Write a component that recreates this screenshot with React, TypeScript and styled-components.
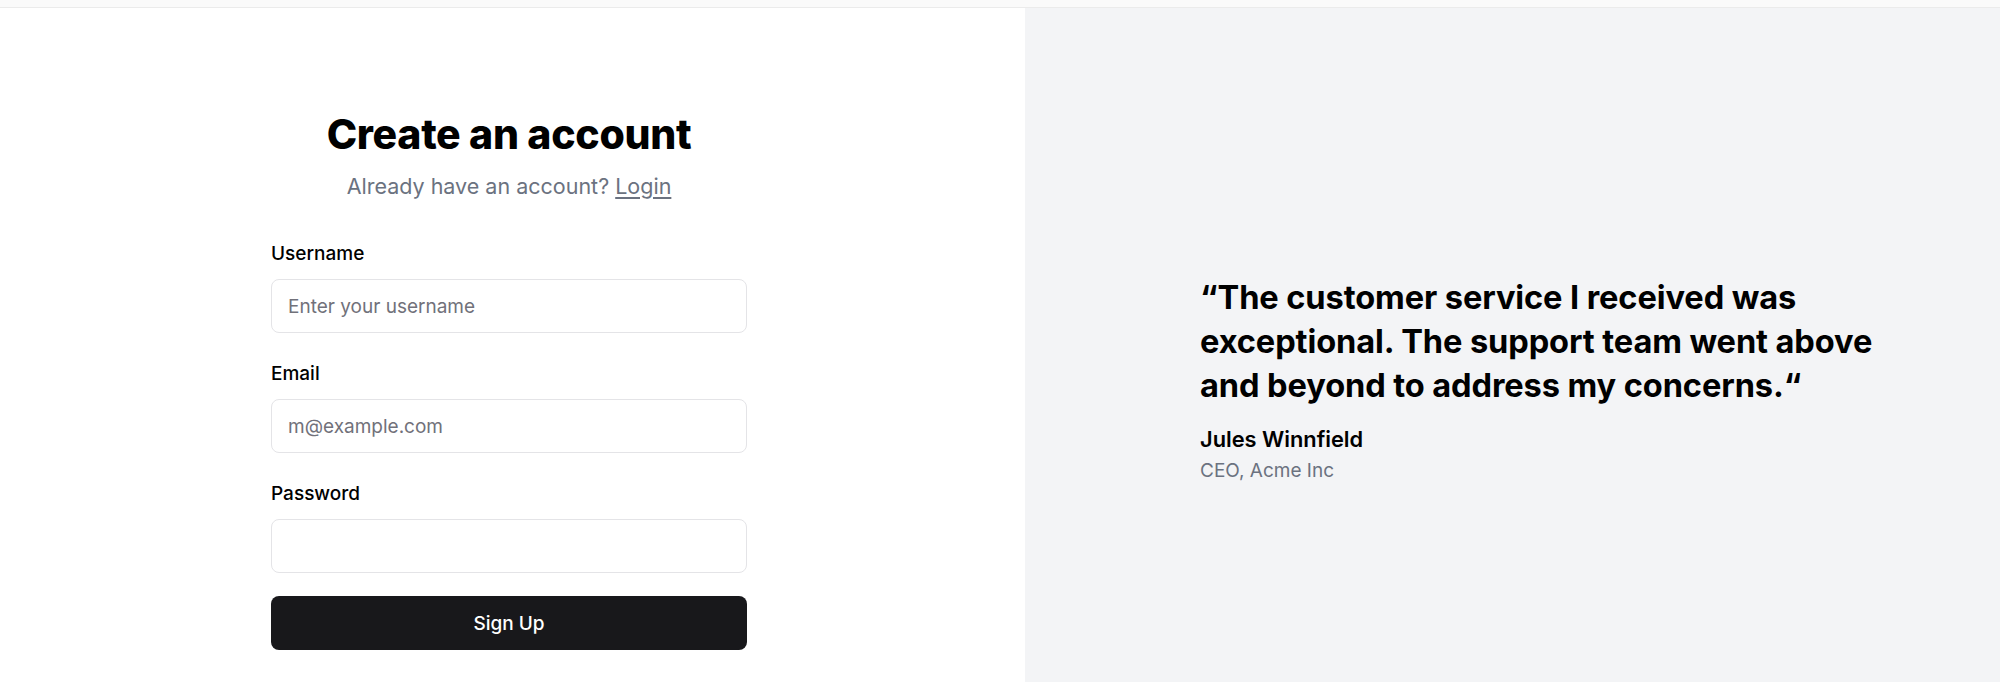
import React from "react";
import styled, { createGlobalStyle } from "styled-components";

const Global = createGlobalStyle`
  * { box-sizing: border-box; }
  html, body { margin: 0; padding: 0; background: #ffffff; }
  body { font-family: Inter, "Noto Sans", Arial, sans-serif; color: #000; }
  input::placeholder { color: #71717a; }
`;

const Page = styled.div`
  width: 2000px;
  height: 682px;
  display: flex;
  flex-direction: column;
  overflow: hidden;
`;

const TopStrip = styled.div`
  height: 8px;
  flex: none;
  background: #fafafa;
  border-bottom: 1px solid #ebebeb;
`;

const Split = styled.div`
  flex: 1;
  display: grid;
  grid-template-columns: 1025px 1fr;
`;

const FormSide = styled.section`
  background: #ffffff;
  padding: 101px 0 0 271px;
`;

const FormColumn = styled.div`
  width: 476px;
  display: flex;
  flex-direction: column;
`;

const Header = styled.header`
  display: flex;
  flex-direction: column;
  align-items: center;
  margin-bottom: 39px;
`;

const Title = styled.h1`
  margin: 0;
  font-size: 41px;
  line-height: 50px;
  font-weight: 800;
  letter-spacing: -0.3px;
  color: #000;
`;

const Subtitle = styled.p`
  margin: 11px 0 0;
  font-size: 21.5px;
  line-height: 32px;
  color: #6b7280;
`;

const LoginLink = styled.a`
  color: #6b7280;
  text-decoration: underline;
  text-underline-offset: 3px;
`;

const Field = styled.div`
  display: flex;
  flex-direction: column;
  gap: 12px;
  margin-bottom: 28px;
`;

const Label = styled.label`
  font-size: 19px;
  line-height: 26px;
  font-weight: 500;
  color: #000;
`;

const Input = styled.input`
  height: 54px;
  width: 100%;
  border: 1px solid #e4e4e7;
  border-radius: 8px;
  padding: 0 16px;
  font-family: inherit;
  font-size: 19px;
  color: #000;
  background: #fff;
  outline: none;
`;

const Button = styled.button`
  margin-top: -5px;
  height: 54px;
  width: 100%;
  border: none;
  border-radius: 8px;
  background: #18181b;
  color: #fff;
  font-family: inherit;
  font-size: 19px;
  font-weight: 500;
`;

const QuoteSide = styled.section`
  background: #f3f4f6;
  padding: 267px 0 0 175px;
`;

const Quote = styled.blockquote`
  margin: 0;
  max-width: 696px;
  display: flex;
  flex-direction: column;
`;

const QuoteText = styled.p`
  margin: 0;
  font-size: 32.6px;
  line-height: 44px;
  font-weight: 700;
  letter-spacing: -0.1px;
  color: #000;
`;

const Author = styled.div`
  margin-top: 17px;
  font-size: 21.8px;
  line-height: 30px;
  font-weight: 600;
  color: #000;
`;

const Role = styled.div`
  margin-top: 3px;
  font-size: 19px;
  line-height: 28px;
  color: #6b7280;
`;

export default function App() {
  return (
    <>
      <Global />
      <Page>
        <TopStrip />
        <Split>
          <FormSide>
            <FormColumn>
              <Header>
                <Title>Create an account</Title>
                <Subtitle>
                  Already have an account? <LoginLink href="#">Login</LoginLink>
                </Subtitle>
              </Header>
              <Field>
                <Label htmlFor="username">Username</Label>
                <Input id="username" placeholder="Enter your username" />
              </Field>
              <Field>
                <Label htmlFor="email">Email</Label>
                <Input id="email" placeholder="m@example.com" />
              </Field>
              <Field>
                <Label htmlFor="password">Password</Label>
                <Input id="password" type="password" />
              </Field>
              <Button>Sign Up</Button>
            </FormColumn>
          </FormSide>
          <QuoteSide>
            <Quote>
              <QuoteText>
                “The customer service I received was exceptional. The support team went above and beyond to address my concerns.“
              </QuoteText>
              <Author>Jules Winnfield</Author>
              <Role>CEO, Acme Inc</Role>
            </Quote>
          </QuoteSide>
        </Split>
      </Page>
    </>
  );
}
